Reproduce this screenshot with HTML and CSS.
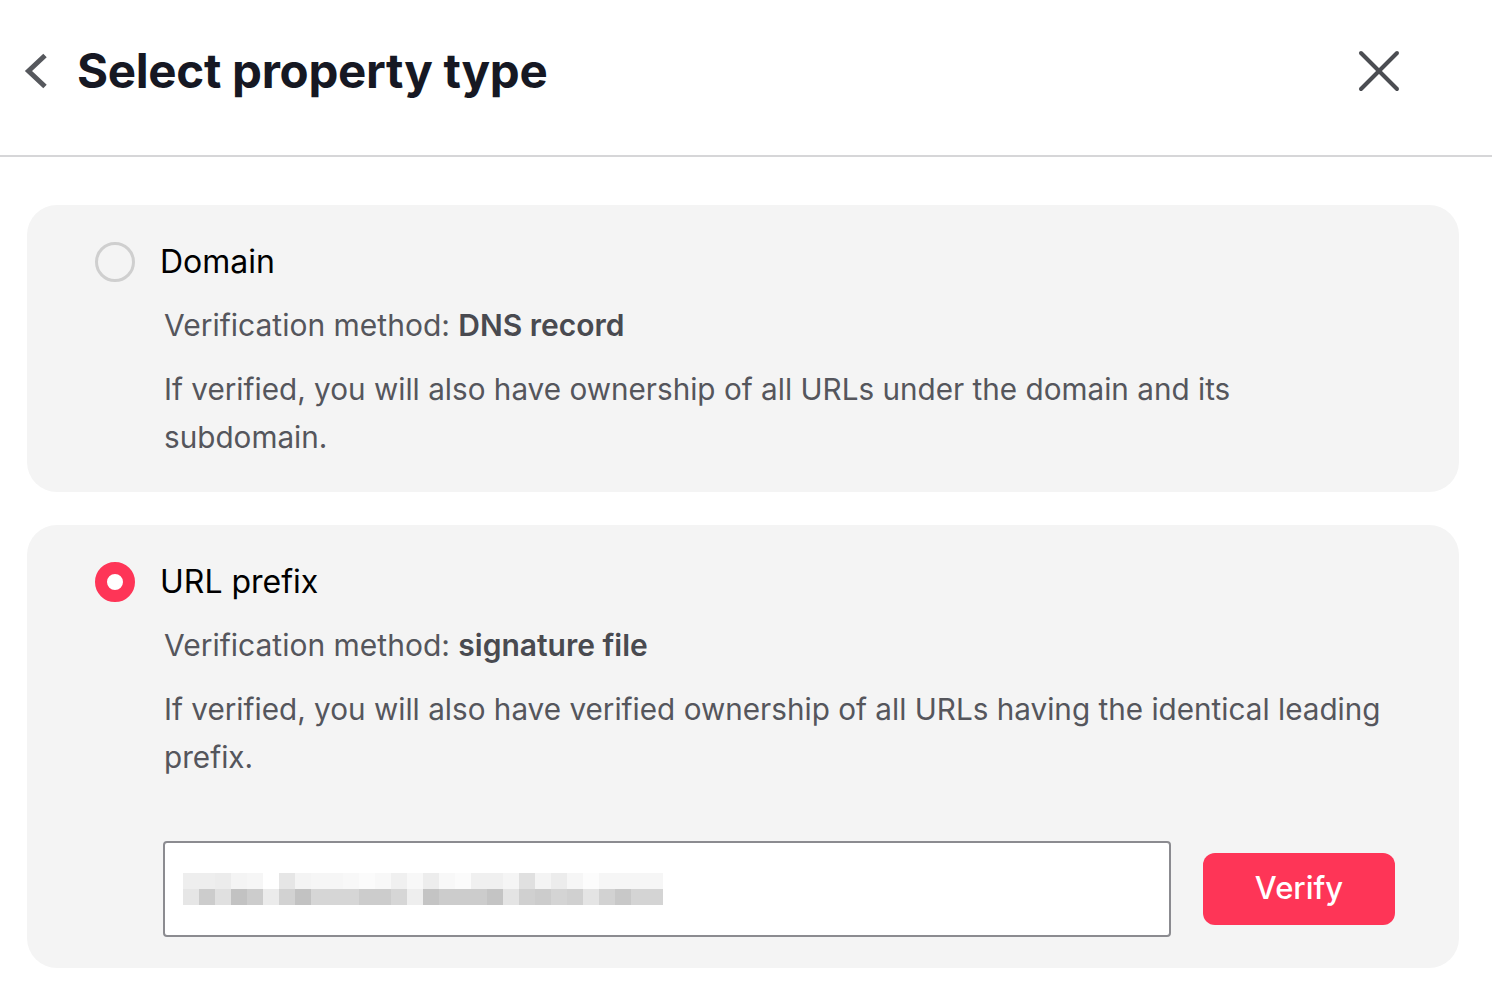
FILE: index.html
```html
<!DOCTYPE html>
<html lang="en">
<head>
    <meta charset="UTF-8">
    <title>Select property type</title>
    <link rel="stylesheet" href="styles.css">
</head>
<body>

<header class="header">
    <button class="icon-btn back" title="Back">
        <svg width="28" height="40" viewBox="0 0 28 40">
            <polyline points="23,4.5 6.5,20 23,35.5" fill="none" stroke="#56585d" stroke-width="5" stroke-linejoin="miter"/>
        </svg>
    </button>
    <h1 class="title">Select property type</h1>
    <button class="icon-btn close" title="Close">
        <svg width="46" height="46" viewBox="0 0 46 46">
            <line x1="5" y1="5" x2="41" y2="41" stroke="#4b4d52" stroke-width="4" stroke-linecap="round"/>
            <line x1="41" y1="5" x2="5" y2="41" stroke="#4b4d52" stroke-width="4" stroke-linecap="round"/>
        </svg>
    </button>
</header>

<main class="options">
    <section class="card">
        <span class="radio"></span>
        <div class="card-body">
            <div class="card-title">Domain</div>
            <div class="method">Verification method: <b>DNS record</b></div>
            <p class="desc">If verified, you will also have ownership of all URLs under the domain and its subdomain.</p>
        </div>
    </section>

    <section class="card">
        <span class="radio checked"></span>
        <div class="card-body">
            <div class="card-title">URL prefix</div>
            <div class="method">Verification method: <b>signature file</b></div>
            <p class="desc">If verified, you will also have verified ownership of all URLs having the identical leading prefix.</p>
            <div class="url-row">
                <div class="url-input">
                    <div class="blur"></div>
                </div>
                <button class="verify">Verify</button>
            </div>
        </div>
    </section>
</main>

</body>
</html>
```

FILE: styles.css
```css
body {
    margin: 0;
    font-family: "Inter", "Noto Sans", sans-serif;
    background-color: #FFFFFF;
    color: #161823;
}

.header {
    height: 141px;
    display: flex;
    align-items: center;
    padding: 0 0 14px 22px;
    border-bottom: 2px solid #d6d6d8;
}

.icon-btn {
    background: none;
    border: none;
    padding: 0;
    display: flex;
    cursor: pointer;
}

.back {
    margin: 0 27px 0 0;
}

.title {
    margin: 0;
    font-size: 47.5px;
    font-weight: 700;
    letter-spacing: -0.3px;
    flex: 1;
}

.close {
    margin-right: 90px;
}

.options {
    padding: 48px 33px 0 27px;
    display: flex;
    flex-direction: column;
    gap: 33px;
}

.card {
    background-color: #f4f4f4;
    border-radius: 30px;
    padding: 33px 64px 31px 68px;
    display: flex;
    gap: 25px;
}

.radio {
    flex: none;
    width: 40px;
    height: 40px;
    margin-top: 4px;
    box-sizing: border-box;
    border-radius: 50%;
    border: 3px solid #cfcfcf;
}

.radio.checked {
    border: 12px solid #fe3557;
    background-color: #FFFFFF;
}

.card-body {
    flex: 1;
}

.card-title {
    font-size: 32px;
    line-height: 48px;
    color: #000000;
}

.method {
    margin-top: 15px;
    font-size: 30px;
    line-height: 48px;
    color: #55565c;
    padding-left: 4px;
}

.method b {
    font-weight: 600;
    color: #494a50;
}

.desc {
    margin: 16px 0 0;
    font-size: 29.7px;
    line-height: 48px;
    color: #55565c;
    padding-left: 4px;
}

.url-row {
    margin-top: 60px;
    display: flex;
    align-items: center;
    gap: 32px;
    padding-left: 3px;
}

.url-input {
    flex: 1;
    height: 96px;
    box-sizing: border-box;
    background-color: #FFFFFF;
    border: 2px solid #8b8b90;
    border-radius: 4px;
    display: flex;
    align-items: center;
    padding-left: 18px;
}

/* pixelated, blurred URL */
.blur {
    width: 480px;
    height: 32px;
    background-repeat: no-repeat;
    background-size: 480px 16px;
    background-position: 0 0, 0 16px;
    background-image:
        linear-gradient(to right,
            #eeeeee 0 16px, #eeeeee 16px 32px, #ececec 32px 48px, #f4f4f4 48px 64px,
            #f6f6f6 64px 80px, #ffffff 80px 96px, #e6e6e6 96px 112px, #f4f4f4 112px 128px,
            #f6f6f6 128px 144px, #f6f6f6 144px 160px, #f8f8f8 160px 176px, #fbfbfb 176px 192px,
            #f8f8f8 192px 208px, #f0f0f0 208px 224px, #f8f8f8 224px 240px, #ededed 240px 256px,
            #f8f8f8 256px 272px, #fbfbfb 272px 288px, #f0f0f0 288px 304px, #f0f0f0 304px 320px,
            #f5f5f5 320px 336px, #e0e0e0 336px 352px, #f4f4f4 352px 368px, #ececec 368px 384px,
            #f6f6f6 384px 400px, #fcfcfc 400px 416px, #f6f6f6 416px 432px, #f6f6f6 432px 448px,
            #f6f6f6 448px 464px, #f6f6f6 464px 480px),
        linear-gradient(to right,
            #e6e6e6 0 16px, #cccccc 16px 32px, #e0e0e0 32px 48px, #c2c2c2 48px 64px,
            #cccccc 64px 80px, #ebebeb 80px 96px, #d2d2d2 96px 112px, #c2c2c2 112px 128px,
            #d6d6d6 128px 144px, #d6d6d6 144px 160px, #d6d6d6 160px 176px, #cccccc 176px 192px,
            #cccccc 192px 208px, #d6d6d6 208px 224px, #eeeeee 224px 240px, #c4c4c4 240px 256px,
            #cccccc 256px 272px, #cccccc 272px 288px, #cccccc 288px 304px, #c4c4c4 304px 320px,
            #e4e4e4 320px 336px, #d0d0d0 336px 352px, #cccccc 352px 368px, #d4d4d4 368px 384px,
            #d0d0d0 384px 400px, #e4e4e4 400px 416px, #d2d2d2 416px 432px, #c8c8c8 432px 448px,
            #d4d4d4 448px 464px, #d4d4d4 464px 480px);
}

.verify {
    width: 192px;
    height: 72px;
    border: none;
    border-radius: 12px;
    background-color: #fe3557;
    color: #FFFFFF;
    font-family: "Inter", "Noto Sans", sans-serif;
    font-size: 31px;
    font-weight: 500;
    padding: 0 0 3px;
}
```
